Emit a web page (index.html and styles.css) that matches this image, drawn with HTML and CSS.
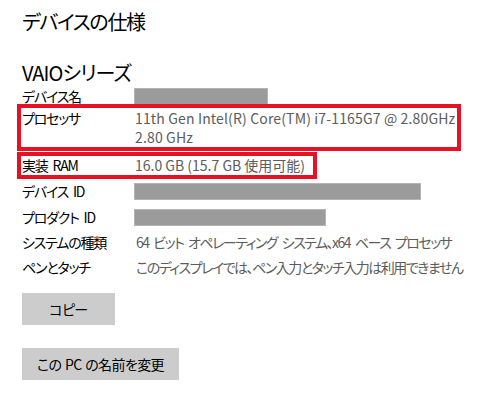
FILE: index.html
```html
<!DOCTYPE html>
<html lang="ja">
<head>
<meta charset="utf-8">
<link rel="stylesheet" href="styles.css">
</head>
<body>
<div class="page">
  <h1 class="title">デバイスの仕様</h1>
  <h2 class="model">VAIOシリーズ</h2>
  <div class="specs">
    <div class="row r-name"><span class="label">デバイス名</span><span class="bar" style="width:134px"></span></div>
    <div class="row hl hl-cpu"><span class="label">プロセッサ</span><span class="value latin">11th Gen Intel(R) Core(TM) i7-1165G7 @ 2.80GHz<br>2.80 GHz</span></div>
    <div class="row hl hl-ram"><span class="label">実装 RAM</span><span class="value">16.0 GB (15.7 GB 使用可能)</span></div>
    <div class="row r-id"><span class="label">デバイス ID</span><span class="bar" style="width:287px"></span></div>
    <div class="row r-pid"><span class="label">プロダクト ID</span><span class="bar" style="width:192px"></span></div>
    <div class="row r-sys"><span class="label">システムの種類</span><span class="value ja">64 ビット オペレーティング システム、x64 ベース プロセッサ</span></div>
    <div class="row r-pen"><span class="label">ペンとタッチ</span><span class="value ja">このディスプレイでは、ペン入力とタッチ入力は利用できません</span></div>
  </div>
  <div class="actions">
    <button class="btn btn-copy">コピー</button>
    <button class="btn btn-rename">この PC の名前を変更</button>
  </div>
</div>
</body>
</html>
```
FILE: styles.css
```css
html, body {
  margin: 0;
  padding: 0;
  background: #fff;
}
body {
  font-family: "Noto Sans CJK JP", sans-serif;
  font-feature-settings: "palt";
  color: #000;
  width: 500px;
  height: 396px;
  overflow: hidden;
}
.page {
  padding: 8px 0 0 22px;
}
.title {
  margin: 0;
  font-size: 20px;
  font-weight: 400;
  line-height: 28px;
  letter-spacing: -1.3px;
}
.model {
  margin: 23px 0 0 0;
  font-size: 20px;
  font-weight: 400;
  line-height: 28px;
  letter-spacing: -0.9px;
}
.specs {
  display: flex;
  flex-direction: column;
  font-size: 14px;
}
.row {
  display: grid;
  grid-template-columns: 112px 1fr;
  align-items: center;
  line-height: 20px;
}
.label {
  color: #000;
  white-space: nowrap;
  letter-spacing: -1.2px;
  word-spacing: 3px;
}
.value {
  color: #5c5c5c;
  white-space: nowrap;
  padding-left: 2px;
}
.value.latin {
  letter-spacing: 0.15px;
}
.value.ja {
  letter-spacing: -1.5px;
  word-spacing: 3px;
}
.bar {
  display: block;
  box-sizing: border-box;
  height: 17px;
  background: #9b9b9b;
  border: 1px solid #b4b4b4;
}
.r-name { line-height: 18px; }
.hl {
  border: 4px solid #e81123;
  margin-left: -5px;
  padding-left: 1px;
  grid-template-columns: 111px 1fr;
  line-height: 19px;
  box-sizing: border-box;
}
.hl-cpu {
  width: 444px;
  margin-top: -1px;
  padding-top: 1px;
  align-items: start;
}
.hl-ram {
  width: 300px;
  margin-top: 1px;
}
.r-id { margin-top: 2px; }
.r-pid { margin-top: 6px; }
.r-sys { margin-top: 5px; }
.r-pen { margin-top: 5px; }
.actions {
  display: flex;
  flex-direction: column;
  align-items: flex-start;
  margin-top: 16px;
  gap: 23px;
}
.btn {
  font-family: inherit;
  font-feature-settings: "palt";
  font-size: 14px;
  color: #000;
  background: #cccccc;
  border: none;
  height: 32px;
  padding: 0;
  letter-spacing: -0.6px;
  word-spacing: 1px;
}
.btn-copy { width: 93px; }
.btn-rename { width: 157px; }
```
